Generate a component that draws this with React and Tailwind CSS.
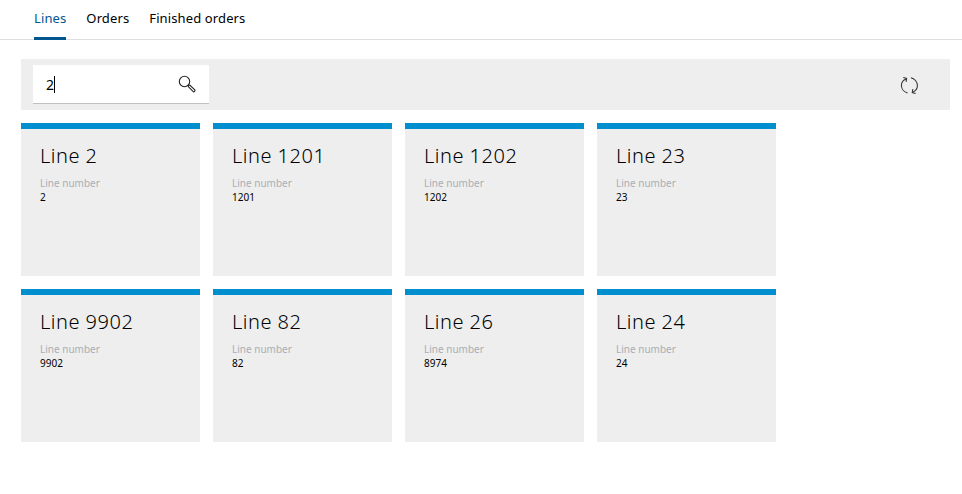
const lines = [
  { name: 'Line 2', number: '2' },
  { name: 'Line 1201', number: '1201' },
  { name: 'Line 1202', number: '1202' },
  { name: 'Line 23', number: '23' },
  { name: 'Line 9902', number: '9902' },
  { name: 'Line 82', number: '82' },
  { name: 'Line 26', number: '8974' },
  { name: 'Line 24', number: '24' },
]

function LineCard({ name, number }) {
  return (
    <div className="h-[153px] bg-[#eeeeee] border-t-[6px] border-[#008ecf] pl-[19px]">
      <p className="mt-[13px] text-[20px] font-light leading-[28px] tracking-[0.5px] text-black">{name}</p>
      <p className="mt-[6px] text-[10px] leading-[14px] text-[#a9afb5]">Line number</p>
      <p className="text-[10px] leading-[14px] text-black">{number}</p>
    </div>
  )
}

export default function App() {
  return (
    <div className="min-h-[494px] bg-white font-['Noto_Sans',sans-serif]">
      <nav className="flex gap-5 h-10 pl-[34px] border-b border-[#dfdfe0] text-[13px] tracking-[0.12px]">
        <a className="h-10 pt-[9px] leading-[18px] border-b-[3px] border-[#005691] text-[#005691]">Lines</a>
        <a className="pt-[9px] leading-[18px] text-black">Orders</a>
        <a className="pt-[9px] leading-[18px] text-black">Finished orders</a>
      </nav>

      <div className="mt-[19px] mr-3 ml-[21px] h-[51px] bg-[#eeeeee] flex justify-between pl-3 pr-[31px] pt-[6px]">
        <div className="w-[176px] h-[39px] bg-white border-b border-[#bfc0c2] flex items-center justify-between pl-[13px] pr-[13px]">
          <span className="flex items-center text-[14px] text-black">
            2<span className="w-px h-[17px] bg-black" />
          </span>
          <svg width="18" height="18" viewBox="0 0 18 18" fill="none" stroke="#222" strokeWidth="1.1">
            <circle cx="6.5" cy="6.5" r="5.2" />
            <path d="M10.4 10.2l1.4-.2 5.2 5.2c.3.6-.9 1.9-1.6 1.6L10.3 11.6z" />
          </svg>
        </div>
        <svg className="mt-[11px]" width="19" height="19" viewBox="0 0 20 20" fill="none" stroke="#333" strokeWidth="1.1">
          <path d="M6.5 3.2C3.4 4.3 1.5 6.8 1.5 10c0 3.8 2.8 7 6.5 7.8" />
          <path d="M3.5 1.5L7 2.5l-.6 3.6" />
          <path d="M11.5 1.8c3.8.8 6.8 4.3 6.8 8.2 0 3-1.8 5.6-4.6 7" />
          <path d="M16.4 18.4l-3.5-1 .6-3.7" />
        </svg>
      </div>

      <div className="ml-[21px] mt-[13px] grid grid-cols-[repeat(4,179px)] gap-[13px]">
        {lines.map(line => (
          <LineCard key={line.name} {...line} />
        ))}
      </div>
    </div>
  )
}
